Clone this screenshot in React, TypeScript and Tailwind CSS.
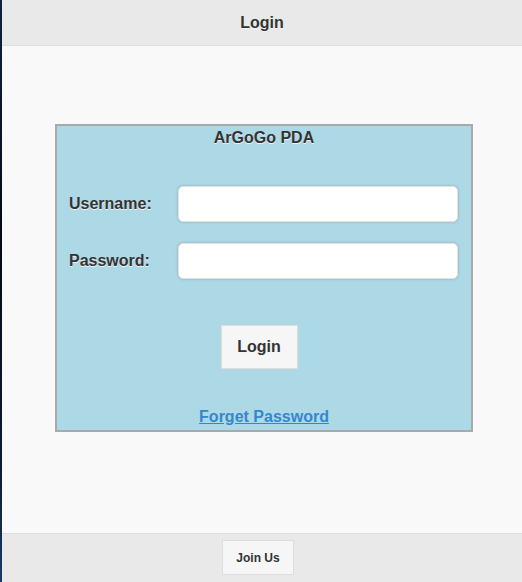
import React from "react";

export default function App() {
  const shadow = "[text-shadow:0_1px_0_#f3f3f3]";
  return (
    <div
      className="flex h-[582px] w-[522px] overflow-hidden text-[#333]"
      style={{ fontFamily: '"Liberation Sans", Arial, sans-serif' }}
    >
      <div className="w-[2px] shrink-0 bg-[linear-gradient(180deg,#0d2344,#050a14_40%,#0a1c36_80%,#1a3a66)]" />
      <div className="flex flex-1 flex-col bg-[#f9f9f9]">
        <header className="flex h-[46px] shrink-0 items-center justify-center border-b border-[#dddddd] bg-[#e9e9e9]">
          <h1 className={`text-[16px] font-bold leading-[20px] ${shadow}`}>Login</h1>
        </header>
        <main className="flex-1 pt-[78px] pl-[53px]">
          <div className="w-[418px] border-2 border-[#a9a9a9] bg-[#add8e6]">
            <div className={`pt-[2px] text-center text-[16px] font-bold leading-[20px] ${shadow}`}>
              ArGoGo PDA
            </div>
            <div className="mt-[38px] flex items-center pl-[12px] pr-[12px]">
              <label className={`w-[109px] text-[16px] font-bold ${shadow}`}>Username:</label>
              <input
                type="text"
                className="h-[36px] w-[280px] rounded-[5px] border border-[#e2e2e2] bg-white shadow-[0_0_3px_rgba(0,0,0,0.22)] outline-none"
              />
            </div>
            <div className="mt-[21px] flex items-center pl-[12px] pr-[12px]">
              <label className={`w-[109px] text-[16px] font-bold ${shadow}`}>Password:</label>
              <input
                type="password"
                className="h-[36px] w-[280px] rounded-[5px] border border-[#e2e2e2] bg-white shadow-[0_0_3px_rgba(0,0,0,0.22)] outline-none"
              />
            </div>
            <div className="mt-[46px] flex justify-center pr-[10px]">
              <button
                className={`h-[44px] w-[77px] border border-[#dddddd] bg-[#f6f6f6] text-[16px] font-bold ${shadow}`}
              >
                Login
              </button>
            </div>
            <div className="mt-[36px] pb-[1px] text-center">
              <a
                href="#"
                className="text-[16px] font-bold leading-[20px] text-[#3388cc] underline"
              >
                Forget Password
              </a>
            </div>
          </div>
        </main>
        <footer className="flex h-[49px] shrink-0 items-start justify-center border-t border-[#dddddd] bg-[#e9e9e9] pt-[6px] pr-[8px]">
          <button
            className={`h-[35px] w-[72px] border border-[#dddddd] bg-[#f6f6f6] text-[12px] font-bold ${shadow}`}
          >
            Join Us
          </button>
        </footer>
      </div>
    </div>
  );
}
